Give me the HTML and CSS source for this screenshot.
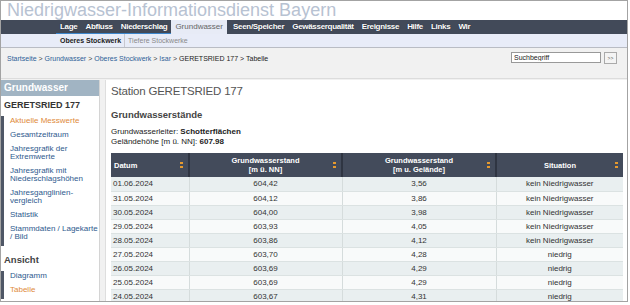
FILE: index.html
```html
<!DOCTYPE html>
<html lang="de">
<head>
  <meta charset="UTF-8">
  <title>Niedrigwasser-Informationsdienst Bayern</title>
  <link rel="stylesheet" href="styles.css">
</head>
<body>
  <div class="frame">

    <!-- Kopf -->
    <div class="header">Niedrigwasser-Informationsdienst Bayern</div>

    <!-- Hauptnavigation -->
    <div class="nav">
      <a href="#" class="lead">Lage</a>
      <a href="#" class="lead">Abfluss</a>
      <a href="#" class="lead">Niederschlag</a>
      <a href="#" class="active">Grundwasser</a>
      <a href="#">Seen/Speicher</a>
      <a href="#">Gewässerqualität</a>
      <a href="#">Ereignisse</a>
      <a href="#">Hilfe</a>
      <a href="#">Links</a>
      <a href="#">Wir</a>
    </div>
    <div class="subnav">
      <a href="#" class="current">Oberes Stockwerk</a>
      <a href="#">Tiefere Stockwerke</a>
    </div>

    <!-- Brotkrumen + Suche -->
    <div class="crumbbar">
      <div class="crumbs">
        <a href="#">Startseite</a> &gt; <a href="#">Grundwasser</a> &gt; <a href="#">Oberes Stockwerk</a> &gt; <a href="#">Isar</a> &gt; <span class="here">GERETSRIED 177 &gt; Tabelle</span>
      </div>
      <form class="search">
        <input type="text" value="Suchbegriff">
        <button type="button">&gt;&gt;</button>
      </form>
    </div>

    <div class="page">
      <!-- Seitenleiste -->
      <div class="side">
        <div class="side-head">Grundwasser</div>
        <div class="station">GERETSRIED 177</div>
        <ul class="menu">
          <li><a href="#" class="on">Aktuelle Messwerte</a></li>
          <li><a href="#">Gesamtzeitraum</a></li>
          <li><a href="#">Jahresgrafik der Extremwerte</a></li>
          <li><a href="#">Jahresgrafik mit Niederschlagshöhen</a></li>
          <li><a href="#">Jahresganglinien-vergleich</a></li>
          <li><a href="#">Statistik</a></li>
          <li><a href="#">Stammdaten / Lagekarte / Bild</a></li>
        </ul>
        <div class="side-title">Ansicht</div>
        <ul class="menu">
          <li><a href="#">Diagramm</a></li>
          <li><a href="#" class="on">Tabelle</a></li>
        </ul>
      </div>

      <!-- Inhalt -->
      <div class="content">
        <h1>Station GERETSRIED 177</h1>
        <h2>Grundwasserstände</h2>
        <p class="info">Grundwasserleiter: <b>Schotterflächen</b><br>Geländehöhe [m ü. NN]: <b>607.98</b></p>

        <table class="data">
          <colgroup>
            <col style="width: 78px">
            <col style="width: 153px">
            <col style="width: 154px">
            <col style="width: 127px">
          </colgroup>
          <thead>
            <tr>
              <th class="left">Datum<span class="sort"></span></th>
              <th>Grundwasserstand<br>[m ü. NN]<span class="sort"></span></th>
              <th>Grundwasserstand<br>[m u. Gelände]<span class="sort"></span></th>
              <th>Situation<span class="sort"></span></th>
            </tr>
          </thead>
          <tbody>
            <tr><td class="left">01.06.2024</td><td>604,42</td><td>3,56</td><td>kein Niedrigwasser</td></tr>
            <tr><td class="left">31.05.2024</td><td>604,12</td><td>3,86</td><td>kein Niedrigwasser</td></tr>
            <tr><td class="left">30.05.2024</td><td>604,00</td><td>3,98</td><td>kein Niedrigwasser</td></tr>
            <tr><td class="left">29.05.2024</td><td>603,93</td><td>4,05</td><td>kein Niedrigwasser</td></tr>
            <tr><td class="left">28.05.2024</td><td>603,86</td><td>4,12</td><td>kein Niedrigwasser</td></tr>
            <tr><td class="left">27.05.2024</td><td>603,70</td><td>4,28</td><td>niedrig</td></tr>
            <tr><td class="left">26.05.2024</td><td>603,69</td><td>4,29</td><td>niedrig</td></tr>
            <tr><td class="left">25.05.2024</td><td>603,69</td><td>4,29</td><td>niedrig</td></tr>
            <tr><td class="left">24.05.2024</td><td>603,67</td><td>4,31</td><td>niedrig</td></tr>
          </tbody>
        </table>
      </div>
    </div>

  </div>
</body>
</html>
```

FILE: styles.css
```css
* {
  box-sizing: border-box;
  margin: 0;
  padding: 0;
}

body {
  font-family: 'Liberation Sans', Arial, sans-serif;
  background: #fff;
  color: #333;
}

a {
  text-decoration: none;
}

.frame {
  width: 628px;
  height: 302px;
  overflow: hidden;
  border: 1px solid #a3a3a3;
  background: #f1f1f1;
}

/* Kopf */
.header {
  height: 19px;
  background: #fff;
  padding-left: 6px;
  font-size: 18px;
  line-height: 19px;
  color: #b7c2d2;
  white-space: nowrap;
}

.nav {
  display: flex;
  height: 14px;
  background: #424a59;
  padding-left: 55px;
}

.nav a {
  font-size: 8px;
  font-weight: bold;
  letter-spacing: -0.3px;
  line-height: 14px;
  color: #fff;
  padding: 0 4px;
  text-shadow: 0 0 1px #1d222b;
}

.nav a.lead {
  box-shadow: inset 0 -1px 0 #3c86cc;
}

.nav a.active {
  background: #e7ebf6;
  color: #666;
  font-weight: normal;
  letter-spacing: 0;
  text-shadow: none;
  padding: 0 4px;
  margin: 0 2px 0 0;
}

.subnav {
  display: flex;
  height: 14px;
  background: #e8ecf8;
  border-bottom: 1px solid #b9bcc4;
  padding-left: 56px;
}

.subnav a {
  font-size: 7px;
  line-height: 13px;
  color: #8a8a8a;
  padding: 0 3px;
}

.subnav a.current {
  color: #222;
  font-weight: bold;
  border-right: 1px solid #c8c8d0;
}

/* Brotkrumen */
.crumbbar {
  display: flex;
  justify-content: space-between;
  align-items: center;
  height: 31px;
  padding: 0 10px 10px 6px;
  border-bottom: 1px solid #dcdcdc;
}

.crumbs {
  font-size: 7px;
  color: #444;
}

.crumbs a {
  color: #2f5f98;
}

.crumbs .here {
  color: #222;
}

.search {
  display: flex;
  gap: 3px;
}

.search input {
  width: 90px;
  height: 11px;
  border: 1px solid #999;
  font-family: inherit;
  font-size: 7px;
  padding: 0 2px;
  color: #222;
}

.search button {
  width: 13px;
  height: 12px;
  border: 1px solid #aaa;
  background: #f4f4f4;
  font-size: 5px;
  color: #555;
}

/* Seitenleiste + Inhalt */
.page {
  display: flex;
  gap: 5px;
  padding-top: 1px;
}

.side {
  width: 99px;
  background: #fff;
  border-right: 1px solid #d4d4d4;
  flex-shrink: 0;
}

.side-head {
  background: #a1b4c3;
  color: #fff;
  font-size: 10px;
  font-weight: bold;
  line-height: 16px;
  padding-left: 3px;
}

.station {
  font-size: 9px;
  font-weight: bold;
  color: #333;
  padding: 3px 0 0 3px;
  line-height: 12px;
}

.menu {
  list-style: none;
  border-left: 3px solid #4f5766;
  margin-top: 5px;
  padding: 0 0 0 6px;
}

.menu li {
  font-size: 8px;
  line-height: 8px;
  padding: 1px 0 5px;
}

.menu a {
  color: #2e5a8e;
}

.menu a.on {
  color: #e08a3a;
}

.side-title {
  font-size: 9.5px;
  font-weight: bold;
  color: #444;
  padding: 8px 0 0 3px;
  line-height: 12px;
}

.content {
  flex: 1;
  background: #fff;
  border-left: 1px solid #dedede;
  padding: 3px 2px 0 5px;
}

.content h1 {
  font-size: 11.5px;
  letter-spacing: -0.2px;
  font-weight: normal;
  color: #555;
  line-height: 17px;
}

.content h2 {
  font-size: 9.5px;
  color: #444;
  margin-top: 8px;
  line-height: 14px;
}

.info {
  font-size: 8px;
  line-height: 9.5px;
  color: #222;
  margin-top: 5px;
}

/* Tabelle */
.data {
  border-collapse: collapse;
  table-layout: fixed;
  width: 512px;
  margin-top: 7px;
}

.data th {
  position: relative;
  background: #434b5b;
  color: #fff;
  font-size: 7.5px;
  line-height: 9px;
  height: 24px;
  border-right: 2px solid #2f3542;
}

.data th:last-child {
  border-right: 0;
}

.data th.left {
  text-align: left;
  padding-left: 3px;
}

.sort {
  position: absolute;
  right: 5px;
  top: 9px;
  width: 3px;
  height: 6px;
  background: linear-gradient(#e69a2e 0 40%, transparent 40% 60%, #e69a2e 60%);
}

.data td {
  font-size: 8px;
  height: 14px;
  line-height: 13px;
  text-align: center;
  color: #333;
  border-right: 1px solid #d5dcdc;
  border-bottom: 1px solid #dbe2e2;
  padding: 0;
}

.data td:last-child {
  border-right: 0;
}

.data td.left {
  text-align: left;
  padding-left: 2px;
}

.data tbody tr:nth-child(odd) {
  background: #e9eff0;
}

.data tbody tr:nth-child(even) {
  background: #f8fafa;
}
```
